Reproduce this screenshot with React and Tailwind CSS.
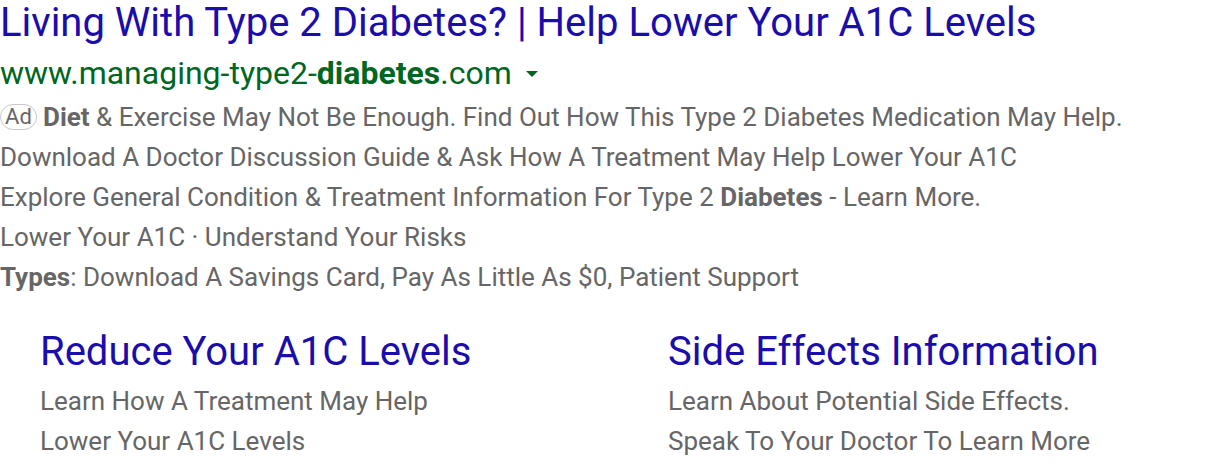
export default function App() {
  const f = { fontFamily: "Roboto, 'Liberation Sans', sans-serif" };
  return (
    <div className="w-[1216px] h-[470px] bg-white overflow-hidden" style={f}>
      <div className="text-[40px] leading-[46px] text-[#1a0dab] whitespace-nowrap">
        Living With Type 2 Diabetes? | Help Lower Your A1C Levels
      </div>
      <div className="mt-[7px] flex items-center text-[32px] leading-[40px] text-[#006621] whitespace-nowrap">
        <span>
          www.managing-type2-<b className="font-bold">diabetes</b>.com
        </span>
        <span className="ml-[14px] mt-[2px] w-0 h-0 border-l-[6px] border-r-[6px] border-t-[6px] border-l-transparent border-r-transparent border-t-[#006621]"></span>
      </div>
      <div className="mt-[4px] text-[26px] leading-[40px] text-[#666666] whitespace-nowrap">
        <div className="flex items-center">
          <span className="inline-flex items-center justify-center h-[26px] w-[37px] border border-[#c8c8c8] rounded-[13px] text-[22px] leading-none mr-[6px]">
            Ad
          </span>
          <span>
            <b className="font-bold">Diet</b> &amp; Exercise May Not Be Enough. Find Out How This Type 2 Diabetes Medication May Help.
          </span>
        </div>
        <div>Download A Doctor Discussion Guide &amp; Ask How A Treatment May Help Lower Your A1C</div>
        <div>
          Explore General Condition &amp; Treatment Information For Type 2 <b className="font-bold">Diabetes</b> - Learn More.
        </div>
        <div>Lower Your A1C · Understand Your Risks</div>
        <div>
          <b className="font-bold">Types</b>: Download A Savings Card, Pay As Little As $0, Patient Support
        </div>
      </div>
      <div className="mt-[30px] flex">
        <div className="w-[668px] pl-[40px]">
          <div className="text-[40px] leading-[50px] text-[#1a0dab] whitespace-nowrap">Reduce Your A1C Levels</div>
          <div className="mt-[4px] text-[26px] leading-[40px] text-[#666666] whitespace-nowrap">
            <div>Learn How A Treatment May Help</div>
            <div>Lower Your A1C Levels</div>
          </div>
        </div>
        <div>
          <div className="text-[40px] leading-[50px] text-[#1a0dab] whitespace-nowrap">Side Effects Information</div>
          <div className="mt-[4px] text-[26px] leading-[40px] text-[#666666] whitespace-nowrap">
            <div>Learn About Potential Side Effects.</div>
            <div>Speak To Your Doctor To Learn More</div>
          </div>
        </div>
      </div>
    </div>
  );
}
